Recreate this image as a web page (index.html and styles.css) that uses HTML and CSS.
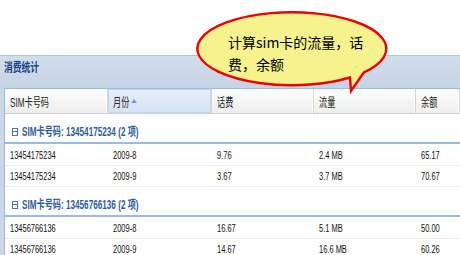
FILE: index.html
```html
<!DOCTYPE html>
<html>
<head>
<meta charset="utf-8">
<link rel="stylesheet" href="styles.css">
</head>
<body>
<div class="panel">
  <div class="panel-title"><span class="sq">消费统计</span></div>
  <div class="panel-body">
    <div class="grid">
      <div class="grid-head">
        <div class="hcell"><span class="sq">SIM卡号码</span></div>
        <div class="hcell sorted"><span class="sq">月份</span><span class="arrow"></span></div>
        <div class="hcell"><span class="sq">话费</span></div>
        <div class="hcell"><span class="sq">流量</span></div>
        <div class="hcell"><span class="sq">余额</span></div>
      </div>

      <div class="group">
        <div class="group-hd"><span class="toggle"></span><span class="sq">SIM卡号码: 13454175234 (2 项)</span></div>
        <div class="group-body">
          <div class="row">
            <div class="cell"><span class="sq">13454175234</span></div>
            <div class="cell"><span class="sq">2009-8</span></div>
            <div class="cell"><span class="sq">9.76</span></div>
            <div class="cell"><span class="sq">2.4 MB</span></div>
            <div class="cell"><span class="sq">65.17</span></div>
          </div>
          <div class="row">
            <div class="cell"><span class="sq">13454175234</span></div>
            <div class="cell"><span class="sq">2009-9</span></div>
            <div class="cell"><span class="sq">3.67</span></div>
            <div class="cell"><span class="sq">3.7 MB</span></div>
            <div class="cell"><span class="sq">70.67</span></div>
          </div>
        </div>
      </div>

      <div class="group">
        <div class="group-hd"><span class="toggle"></span><span class="sq">SIM卡号码: 13456766136 (2 项)</span></div>
        <div class="group-body">
          <div class="row">
            <div class="cell"><span class="sq">13456766136</span></div>
            <div class="cell"><span class="sq">2009-8</span></div>
            <div class="cell"><span class="sq">16.67</span></div>
            <div class="cell"><span class="sq">5.1 MB</span></div>
            <div class="cell"><span class="sq">50.00</span></div>
          </div>
          <div class="row">
            <div class="cell"><span class="sq">13456766136</span></div>
            <div class="cell"><span class="sq">2009-9</span></div>
            <div class="cell"><span class="sq">14.67</span></div>
            <div class="cell"><span class="sq">16.6 MB</span></div>
            <div class="cell"><span class="sq">60.26</span></div>
          </div>
        </div>
      </div>
    </div>
  </div>
</div>

<div class="callout">
  <svg class="callout-shape" width="460" height="100" viewBox="0 0 460 100">
    <path d="M364,72.3 A94.5,36.5 0 1,0 350,77.5 L351,91 Z" fill="#f6f28e" stroke="#ee0000" stroke-width="2.4" stroke-linejoin="miter"/>
  </svg>
  <div class="callout-text">计算sim卡的流量，话费，余额</div>
</div>
</body>
</html>
```

FILE: styles.css
```css
html, body {
  margin: 0;
  padding: 0;
}
body {
  width: 460px;
  height: 255px;
  overflow: hidden;
  background: #ffffff;
  position: relative;
  font-family: "Liberation Sans", "Noto Sans CJK SC", sans-serif;
}

.sq {
  display: inline-block;
  white-space: nowrap;
  transform: scaleX(0.68);
  transform-origin: 0 50%;
}

.panel {
  margin-top: 55px;
  border-top: 1px solid #aec2d9;
  background: #cad7e7;
}
.panel-title {
  box-sizing: border-box;
  height: 32px;
  padding: 5px 0 0 4px;
  line-height: 14px;
  font-size: 12px;
  font-weight: bold;
  color: #15428b;
  background: linear-gradient(#d2ddea, #c6d3e4);
}
.panel-title .sq {
  transform: scaleX(0.73);
}
.panel-body {
  padding-left: 4px;
}
.grid {
  background: #ffffff;
  border-left: 1px solid #99bbe8;
  border-top: 1px solid #99bbe8;
}

.grid-head {
  display: grid;
  grid-template-columns: 103px 104px 102px 102px 1fr;
  height: 24px;
  border-bottom: 1px solid #d0d0d0;
  background: linear-gradient(#ffffff, #ededed);
}
.hcell {
  display: flex;
  align-items: center;
  padding-left: 5px;
  font-size: 12px;
  color: #222222;
  border-right: 1px solid #d5d5d5;
  box-shadow: inset -1px 0 0 #ffffff;
}
.hcell.sorted {
  background: linear-gradient(#e7eff9, #d5e2f3);
  box-shadow: inset 0 0 0 1px #c3d6ef;
}
.arrow {
  width: 0;
  height: 0;
  margin-left: -6px;
  border-left: 3px solid transparent;
  border-right: 3px solid transparent;
  border-bottom: 4px solid #7c9ccc;
}

.group-hd {
  box-sizing: border-box;
  height: 30px;
  padding: 11px 0 0 7px;
  line-height: 14px;
  font-size: 12px;
  font-weight: bold;
  color: #2f5c9e;
  border-bottom: 2px solid #99bbe8;
  display: flex;
  align-items: flex-start;
}
.toggle {
  box-sizing: border-box;
  width: 6px;
  height: 8px;
  margin: 3px 4px 0 0;
  border: 1px solid #4f75ab;
  position: relative;
}
.toggle::after {
  content: "";
  position: absolute;
  left: 0;
  right: 0;
  top: 2px;
  height: 1px;
  background: #4f75ab;
}
.group-body {
  padding-top: 1px;
}
.row {
  display: grid;
  grid-template-columns: 103px 104px 102px 102px 1fr;
  height: 20px;
  border-bottom: 1px solid #ededed;
}
.cell {
  display: flex;
  align-items: center;
  padding-left: 5px;
  font-size: 11px;
  color: #111111;
}

.callout {
  position: absolute;
  left: 0;
  top: 0;
  width: 460px;
  height: 100px;
}
.callout-shape {
  position: absolute;
  left: 0;
  top: 0;
}
.callout-text {
  position: absolute;
  left: 228px;
  top: 31px;
  width: 140px;
  font-family: "Noto Sans CJK SC", sans-serif;
  font-size: 14px;
  line-height: 22px;
  color: #000000;
}
```
